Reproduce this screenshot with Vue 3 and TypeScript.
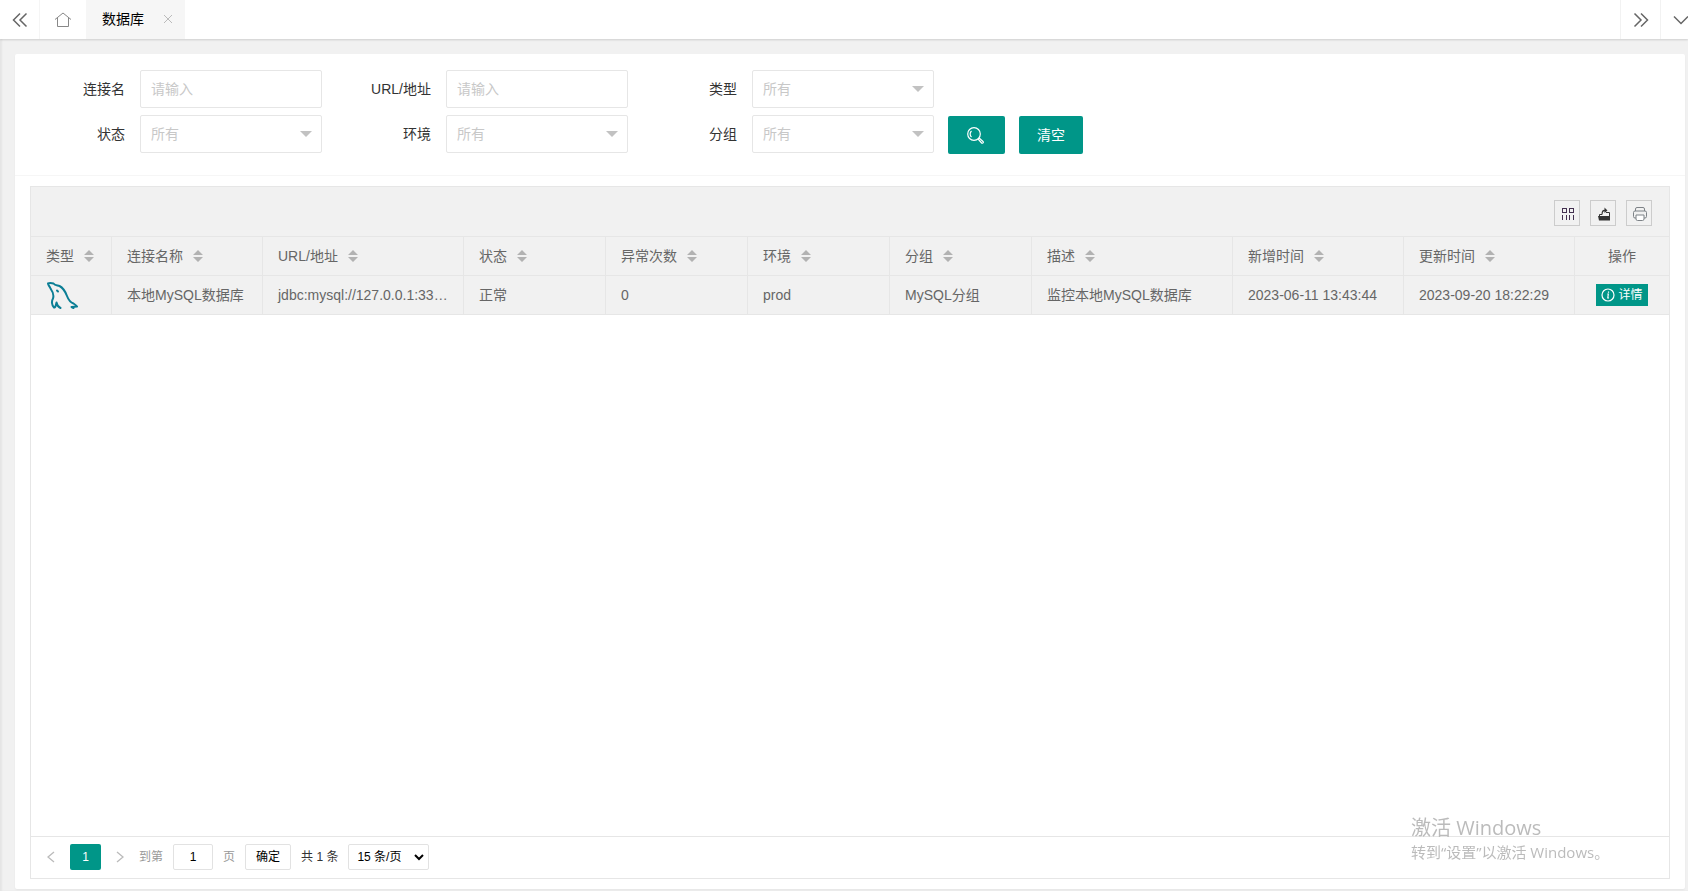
<script setup lang="ts">
import { ref } from 'vue'

interface Field {
  id: string
  label: string
  kind: 'text' | 'select'
}

interface Column {
  key: string
  title: string
  width: number
}

const fields: Field[] = [
  { id: 'connName', label: '连接名', kind: 'text' },
  { id: 'url', label: 'URL/地址', kind: 'text' },
  { id: 'dbType', label: '类型', kind: 'select' },
  { id: 'status', label: '状态', kind: 'select' },
  { id: 'env', label: '环境', kind: 'select' },
  { id: 'group', label: '分组', kind: 'select' },
]

const columns: Column[] = [
  { key: 'type', title: '类型', width: 81 },
  { key: 'name', title: '连接名称', width: 151 },
  { key: 'url', title: 'URL/地址', width: 201 },
  { key: 'status', title: '状态', width: 142 },
  { key: 'errors', title: '异常次数', width: 142 },
  { key: 'env', title: '环境', width: 142 },
  { key: 'group', title: '分组', width: 142 },
  { key: 'desc', title: '描述', width: 201 },
  { key: 'created', title: '新增时间', width: 171 },
  { key: 'updated', title: '更新时间', width: 171 },
  { key: 'action', title: '操作', width: 94 },
]

const rows: Record<string, string>[] = [
  {
    name: '本地MySQL数据库',
    url: 'jdbc:mysql://127.0.0.1:33…',
    status: '正常',
    errors: '0',
    env: 'prod',
    group: 'MySQL分组',
    desc: '监控本地MySQL数据库',
    created: '2023-06-11 13:43:44',
    updated: '2023-09-20 18:22:29',
  },
]

const page = ref('1')
</script>

<template>
  <div class="app">
    <header class="tabs">
      <button class="tab-ctl left" type="button" aria-label="向左">
        <svg width="16" height="16" viewBox="0 0 16 16"><path d="M8 1.500L1.500 8L8 14.500M14.500 1.500L8 8L14.500 14.500" /></svg>
      </button>
      <a class="home" href="#" aria-label="首页">
        <svg width="18" height="16" viewBox="0 0 18 16"><path d="M1 7.500L9 1L17 7.500M3.500 6V14.500H14.500V6" /></svg>
      </a>
      <a class="tab" href="#">
        <span>数据库</span>
        <svg width="10" height="10" viewBox="0 0 10 10"><path d="M1 1L9 9M9 1L1 9" /></svg>
      </a>
      <div class="spacer"></div>
      <button class="tab-ctl right" type="button" aria-label="向右">
        <svg width="16" height="16" viewBox="0 0 16 16"><path d="M1.500 1.500L8 8L1.500 14.500M8 1.500L14.500 8L8 14.500" /></svg>
      </button>
      <button class="tab-ctl more" type="button" aria-label="更多">
        <svg width="16" height="16" viewBox="0 0 16 16"><path d="M1 4.500L8 11.500L15 4.500" /></svg>
      </button>
    </header>

    <main class="card">
      <form class="filters" @submit.prevent>
        <div class="grid">
          <div v-for="f in fields" :key="f.id" class="field">
            <label :for="f.id">{{ f.label }}</label>
            <input v-if="f.kind === 'text'" :id="f.id" type="text" placeholder="请输入" />
            <div v-else class="select">
              <select :id="f.id"><option>所有</option></select>
              <i class="caret"></i>
            </div>
          </div>
        </div>
        <div class="buttons">
          <button class="primary" type="submit" aria-label="查询">
            <svg width="21" height="18" viewBox="0 0 21 18">
              <circle cx="8" cy="8" r="6.300" />
              <path d="M5.500 11A4 4 0 0 1 5.500 5" />
              <path d="M12.300 13.200L13.500 12.200L17 15.500A1 1 0 0 1 15.600 17Z" />
            </svg>
          </button>
          <button class="primary" type="reset">清空</button>
        </div>
      </form>

      <section class="body">
        <div class="grid-box">
          <div class="toolbar">
            <button type="button" aria-label="筛选列">
              <svg width="14" height="14" viewBox="0 0 14 14" shape-rendering="crispEdges"><path d="M1.500 1.500H5.500V5.500H1.500ZM8.500 1.500H12.500V5.500H8.500ZM1.500 8V13M5.500 8V13M8.500 8V13M12.500 8V13" fill="none" stroke="#43304f" /></svg>
            </button>
            <button type="button" aria-label="导出">
              <svg width="14" height="14" viewBox="0 0 14 14"><path d="M1 9H13V13.500H2Z" fill="#333" /><path d="M2.500 9V7.500H5M9 5.500H12.500V9" fill="none" stroke="#333" /><path d="M4.500 7.500C4.500 4 5.500 2.800 7.500 2.800V0.500L10.500 3.500L7.500 6V4.300C6 4.300 5.700 5.500 5.700 7.500Z" fill="#333" /></svg>
            </button>
            <button type="button" aria-label="打印">
              <svg width="16" height="16" viewBox="0 0 16 16" fill="none" stroke="#7d8287"><path d="M3.500 5V3Q3.500 1.500 5 1.500H11Q12.500 1.500 12.500 3V5M4 12H3Q1.500 12 1.500 10.500V6.500Q1.500 5 3 5H13Q14.500 5 14.500 6.500V10.500Q14.500 12 13 12H12" /><path d="M4 9H12V13Q12 14.500 10.500 14.500H5.500Q4 14.500 4 13Z" fill="#fff" /></svg>
            </button>
          </div>

          <table>
            <colgroup>
              <col v-for="c in columns" :key="c.key" :style="{ width: c.width + 'px' }" />
            </colgroup>
            <thead>
              <tr>
                <th v-for="c in columns" :key="c.key" scope="col" :class="{ center: c.key === 'action' }">
                  <span>{{ c.title }}</span>
                  <svg v-if="c.key !== 'action'" class="sort" width="10" height="12" viewBox="0 0 10 12"><path d="M0 5L5 0L10 5ZM0 7H10L5 12Z" /></svg>
                </th>
              </tr>
            </thead>
            <tbody>
              <tr v-for="(r, i) in rows" :key="i">
                <td v-for="c in columns" :key="c.key" :class="{ center: c.key === 'action' }">
                  <svg v-if="c.key === 'type'" class="dolphin" width="33" height="28" viewBox="0 0 33 28" role="img" aria-label="MySQL">
                    <path d="M7 17.500C5.500 20 5.500 24 8 26.500C10 26.500 9.500 24.500 10.500 21.500C11 24 12 26 14.500 27M7 17.500C8 14.500 7 11 4.500 7.500C3.500 5 2 4 2 2.500C3.500 1.800 5.500 2 7.500 2.500C9 4.500 11.500 4.200 13.500 5C17.500 7 19.500 11 21 15C22.500 19 24.500 21.500 27.500 22.500C29 23.500 30.500 24.500 31 25.500L25.500 26L27.500 27" />
                    <path d="M11 9.500L12 10.500" />
                  </svg>
                  <button v-else-if="c.key === 'action'" class="detail" type="button">
                    <svg width="14" height="14" viewBox="0 0 14 14"><circle cx="7" cy="7" r="6" /><path d="M7.500 3.500V4.700M6.300 6H7.300L6.800 10H8" /></svg>
                    <span>详情</span>
                  </button>
                  <template v-else>{{ r[c.key] }}</template>
                </td>
              </tr>
            </tbody>
          </table>

          <div class="blank"></div>

          <nav class="pager" aria-label="分页">
            <button class="arrow" type="button" aria-label="上一页">
              <svg width="8" height="12" viewBox="0 0 8 12"><path d="M7 1L1 6L7 11" /></svg>
            </button>
            <button class="current" type="button">1</button>
            <button class="arrow" type="button" aria-label="下一页">
              <svg width="8" height="12" viewBox="0 0 8 12"><path d="M1 1L7 6L1 11" /></svg>
            </button>
            <label class="jump">到第 <input v-model="page" type="text" /> 页</label>
            <button class="ok" type="button">确定</button>
            <span class="total">共 1 条</span>
            <div class="size">
              <select aria-label="每页条数"><option>15 条/页</option></select>
              <svg width="10" height="8" viewBox="0 0 10 8"><path d="M1 2L5 6L9 2" /></svg>
            </div>
          </nav>
        </div>
      </section>
    </main>

    <aside class="activate">
      <div class="big">激活 Windows</div>
      <div class="small">转到“设置”以激活 Windows。</div>
    </aside>
  </div>
</template>

<style>
body {
  background: #f1f1f1;
}
</style>

<style scoped>
.app {
  display: flex;
  flex-direction: column;
  min-height: 100vh;
  box-sizing: border-box;
  padding-bottom: 2px;
  background: #f1f1f1;
  box-shadow: inset 2px 0 2px rgba(0, 0, 0, 0.05);
  color: #333;
  font: 14px/20px "Liberation Sans", "Noto Sans CJK SC", sans-serif;
}
.app * {
  box-sizing: border-box;
}
button,
input,
select {
  margin: 0;
  padding: 0;
  border: 0;
  border-radius: 0;
  background: none;
  color: inherit;
  font: inherit;
  outline: 0;
}
select {
  appearance: none;
}
svg {
  display: block;
  flex: none;
}

.tabs {
  display: flex;
  height: 39px;
  overflow: hidden;
  flex: none;
  background: #fff;
  box-shadow: 0 1px 2px rgba(0, 0, 0, 0.15);
}
.tabs svg {
  fill: none;
  stroke: #666;
}
.tab-ctl,
.home {
  display: flex;
  flex: none;
  align-items: center;
  justify-content: center;
  width: 40px;
}
.tab-ctl svg {
  stroke-width: 1.5;
}
.left {
  border-right: 1px solid #f5f5f5;
}
.right,
.more {
  border-left: 1px solid #f2f2f2;
}
.more {
  margin-right: -12px;
}
.home {
  width: 46px;
}
.home svg {
  stroke: #888;
}
.tab {
  display: flex;
  align-items: center;
  gap: 19px;
  padding: 0 12px 2px 16px;
  background: #f6f6f6;
  color: #000;
  text-decoration: none;
}
.tab svg {
  stroke: #bbb;
}
.spacer {
  flex: 1;
}

.card {
  display: flex;
  flex: 1;
  flex-direction: column;
  margin: 15px 3px 0 15px;
  border-radius: 2px;
  background: #fff;
  box-shadow: 0 1px 2px rgba(0, 0, 0, 0.05);
}
.filters {
  display: flex;
  align-items: flex-end;
  gap: 14px;
  padding: 16px 15px 22px;
  border-bottom: 1px solid #f6f6f6;
}
.grid {
  display: grid;
  grid-template-columns: repeat(3, 292px);
  gap: 7px 14px;
}
.field {
  display: flex;
  align-items: center;
}
.field label {
  width: 110px;
  padding-right: 15px;
  text-align: right;
}
.field input,
.field select {
  width: 182px;
  height: 38px;
  padding: 0 10px;
  border: 1px solid #e6e6e6;
  border-radius: 2px;
  background: #fff;
  color: #c8c8c8;
}
.field input::placeholder {
  color: #c8c8c8;
  opacity: 1;
}
.select {
  position: relative;
}
.caret {
  position: absolute;
  top: 16px;
  right: 10px;
  border: 6px solid transparent;
  border-top-color: #c2c2c2;
  border-bottom: 0;
  pointer-events: none;
}
.buttons {
  display: flex;
  gap: 14px;
  margin-bottom: -1px;
}
.primary {
  height: 38px;
  padding: 0 18px;
  border-radius: 2px;
  background: #009688;
  color: #fff;
}
.primary svg {
  fill: none;
  stroke: #fff;
  stroke-width: 1.2;
}

.body {
  display: flex;
  flex: 1;
  padding: 10px 15px;
}
.grid-box {
  display: flex;
  flex: 1;
  flex-direction: column;
  min-width: 0;
  border: 1px solid #e6e6e6;
  color: #666;
}
.toolbar {
  display: flex;
  align-items: center;
  justify-content: flex-end;
  gap: 10px;
  height: 50px;
  padding: 3px 17px 0;
  border-bottom: 1px solid #e6e6e6;
  background: #f1f1f1;
}
.toolbar button {
  display: flex;
  align-items: center;
  justify-content: center;
  width: 26px;
  height: 26px;
  padding: 2px 0 0 2px;
  border: 1px solid #ccc;
}
table {
  width: 100%;
  border-collapse: separate;
  border-spacing: 0;
  table-layout: fixed;
  background: #f1f1f1;
}
th,
td {
  height: 39px;
  padding: 0 15px;
  overflow: hidden;
  border-right: 1px solid #e6e6e6;
  border-bottom: 1px solid #e6e6e6;
  font-weight: 400;
  text-align: left;
  text-overflow: ellipsis;
  vertical-align: middle;
  white-space: nowrap;
}
th:last-child,
td:last-child {
  border-right: 0;
}
.center {
  text-align: center;
}
.sort {
  display: inline-block;
  margin-left: 10px;
  vertical-align: -1px;
  fill: #b2b2b2;
}
.dolphin {
  fill: none;
  stroke: #0b7e95;
  stroke-width: 2;
  stroke-linecap: round;
  stroke-linejoin: round;
}
.detail {
  display: inline-flex;
  align-items: center;
  gap: 3px;
  height: 22px;
  padding: 0 5px;
  background: #009688;
  color: #fff;
  font-size: 12px;
  vertical-align: middle;
}
.detail svg {
  fill: none;
  stroke: #fff;
  stroke-width: 1.2;
}
.blank {
  flex: 1;
  background: #fff;
}

.pager {
  display: flex;
  align-items: center;
  height: 42px;
  padding: 0 7px 2px;
  border-top: 1px solid #e6e6e6;
  font-size: 12px;
}
.arrow {
  display: flex;
  align-items: center;
  justify-content: center;
  width: 26px;
  height: 26px;
}
.arrow + .current {
  margin-left: 6px;
}
.arrow svg {
  fill: none;
  stroke: #bbb;
  stroke-width: 1.3;
}
.current {
  width: 31px;
  height: 26px;
  border-radius: 2px;
  background: #009688;
  color: #fff;
}
.current + .arrow {
  margin-left: 6px;
}
.jump {
  display: flex;
  align-items: center;
  gap: 10px;
  margin-left: 6px;
  color: #999;
}
.jump input,
.ok,
.size select {
  height: 26px;
  border: 1px solid #e2e2e2;
  border-radius: 2px;
  background: #fff;
  color: #000;
}
.jump input {
  width: 40px;
  text-align: center;
}
.ok {
  margin-left: 10px;
  padding: 0 10px;
}
.total {
  margin: 0 10px;
  color: #333;
}
.size {
  position: relative;
}
.size select {
  width: 81px;
  padding: 0 8px;
}
.size svg {
  position: absolute;
  top: 9px;
  right: 5px;
  fill: none;
  stroke: #000;
  stroke-width: 2;
  pointer-events: none;
}

.activate {
  position: fixed;
  right: 76px;
  bottom: 28px;
  width: 201px;
  color: rgba(120, 120, 120, 0.5);
  font-family: "Open Sans", "Noto Sans CJK SC", sans-serif;
  white-space: nowrap;
  pointer-events: none;
}
.big {
  font-size: 20px;
  line-height: 26px;
}
.small {
  font-size: 15px;
  line-height: 22px;
}
</style>
